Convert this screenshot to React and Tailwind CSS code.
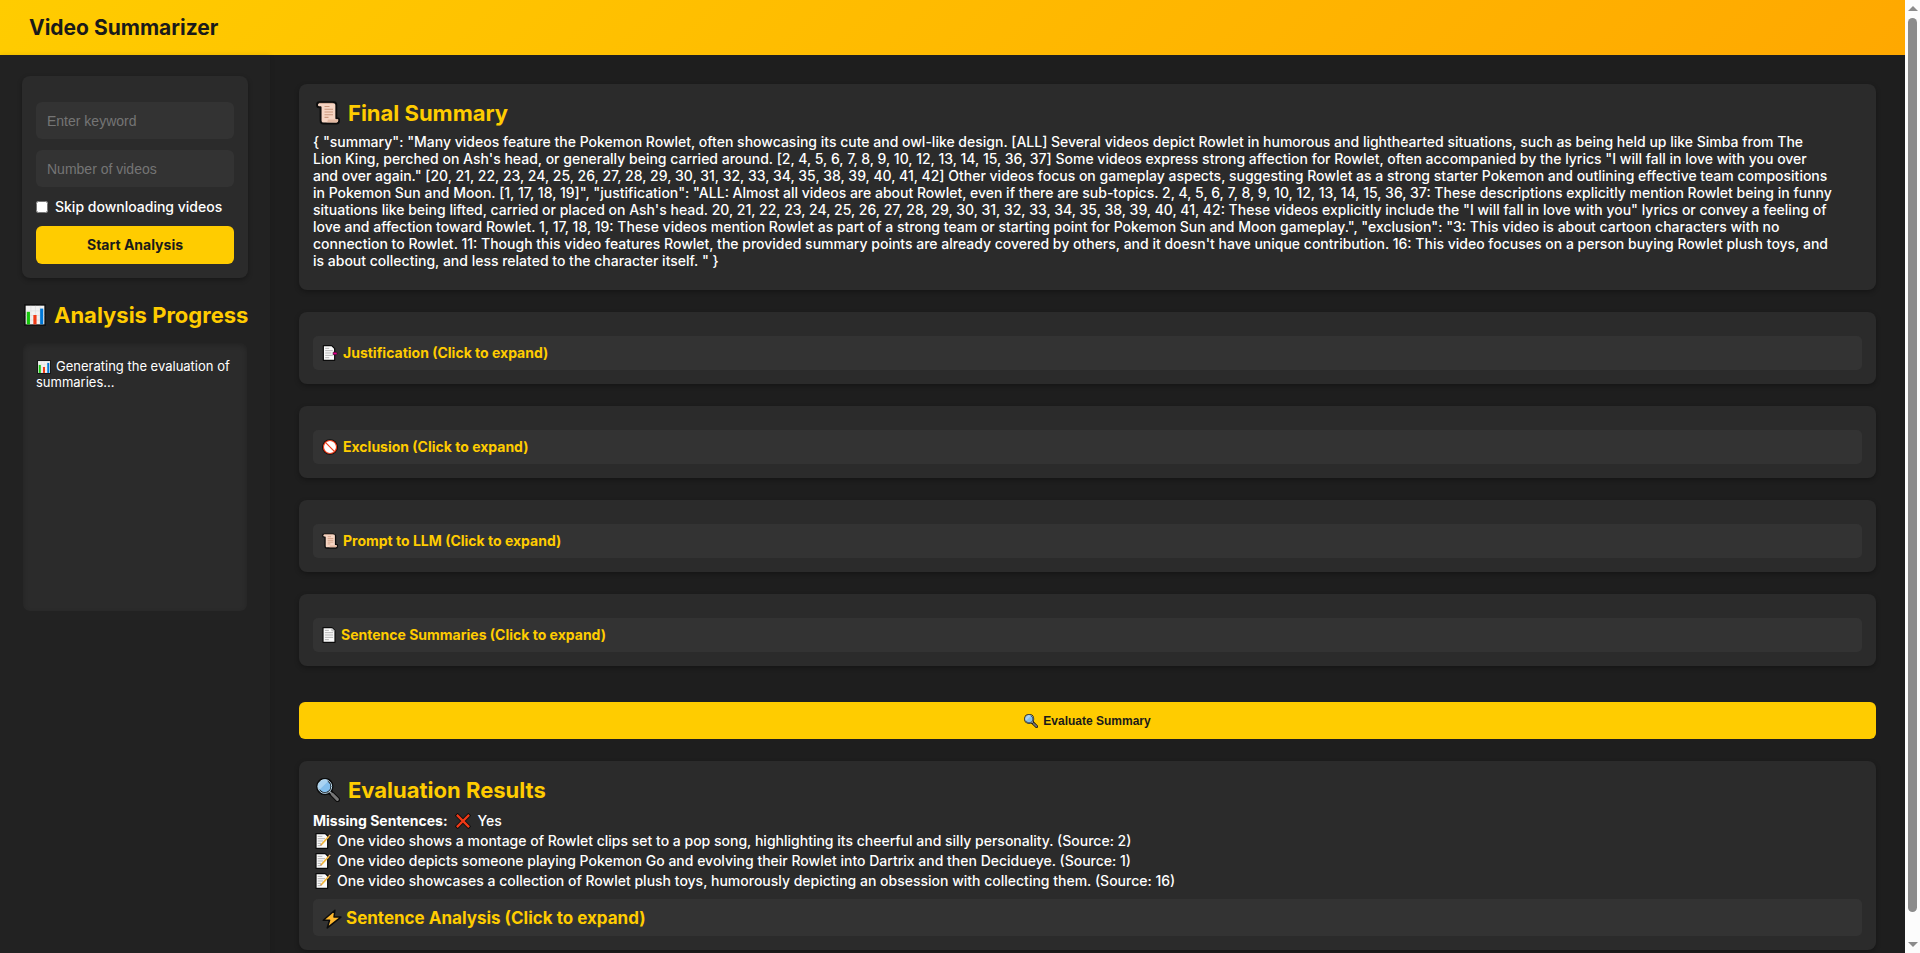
import { useState } from "react";

function Icon({ size = "size-6", box = "0 0 24 24", children }) {
  return (
    <svg viewBox={box} className={`${size} shrink-0`} aria-hidden="true">
      {children}
    </svg>
  );
}

function ScrollIcon({ size }) {
  return (
    <Icon size={size}>
      <path
        d="M3.500 1.200h14.200c2 0 2.600 1 2.600 2.800v13.200h.9c1.500 0 2 .8 1.900 2.300-.1 2-1 3-2.700 3H7.500c-2 0-2.900-1-2.900-2.800V6.300h-1.300C1.800 6.300 1 5.200 1 3.700 1 2.200 1.900 1.200 3.500 1.200z"
        fill="#f6d5c3"
        stroke="#0c0c0c"
        strokeWidth="1.900"
        strokeLinejoin="round"
      />
      <path d="M3.200 2.400h13.600" stroke="#d9b29c" strokeWidth="1" />
      <path d="M8.500 5.500h5M8.500 8.300h8.500M8.500 11h8.500M8.500 13.700h8.500M8.500 16.400h4" stroke="#c9977c" strokeWidth="1.100" />
      <path d="M10 21.300c1.600 0 1.800-1.200 1.800-2.700h10.400c.2 1.800-.6 2.900-2 2.900z" fill="#e3b9a2" />
    </Icon>
  );
}

function ChartIcon({ size }) {
  return (
    <Icon size={size}>
      <rect x="1" y="1" width="22" height="22" fill="#f2f2f2" stroke="#0c0c0c" strokeWidth="1.600" />
      <path d="M2 7.500h20M2 12.500h20M2 17.500h20M7.500 2v20M12.500 2v20M17.500 2v20" stroke="#dcdcdc" strokeWidth=".7" />
      <path d="M3 8.500h3.500V22.200H3z" fill="#16c60c" />
      <path d="M10.200 12h3.500v10.200h-3.500z" fill="#f03a17" />
      <path d="M17.600 5h3.400v17.200h-3.400z" fill="#0078d7" />
    </Icon>
  );
}

function PageIcon() {
  return (
    <Icon size="h-4 w-3.5" box="0.500 0 21 24">
      <path d="M2 1h13.500l4.500 4.500V23H2z" fill="#fafafa" stroke="#0c0c0c" strokeWidth="1.800" strokeLinejoin="round" />
      <path d="M4.800 5h6M4.800 8.500h12.400M4.800 12h12.400M4.800 15.500h12.400M4.800 19h6" stroke="#b5b5b5" strokeWidth="1.500" />
      <path d="M15.200 1.500v4.300h4.500" fill="#dedede" stroke="#8c8c8c" strokeWidth=".7" />
    </Icon>
  );
}

function TabPageIcon({ size }) {
  return (
    <Icon size={size}>
      <path d="M2 1h12.500l4.500 4.500V23H2z" fill="#fafafa" stroke="#0c0c0c" strokeWidth="1.800" strokeLinejoin="round" />
      <path d="M4.800 5h6M4.800 8.500h11.400M4.800 12h9.400M4.800 15.500h11.400M4.800 19h6" stroke="#b5b5b5" strokeWidth="1.500" />
      <path d="M16.500 10.800h5c1.400 0 1.400 3.800 0 3.800h-5z" fill="#e3008c" stroke="#1a0a12" strokeWidth=".8" />
    </Icon>
  );
}

function ForbiddenIcon({ size }) {
  return (
    <Icon size={size}>
      <circle cx="12" cy="12" r="11.800" fill="#0c0c0c" />
      <circle cx="12" cy="12" r="9.800" fill="#fff" stroke="#f03a17" strokeWidth="1.700" />
      <path d="M5.500 5.500l13 13" stroke="#f03a17" strokeWidth="1.700" />
    </Icon>
  );
}

function LensIcon({ size }) {
  return (
    <Icon size={size}>
      <path d="M13.500 13.500l8 8" stroke="#0c0c0c" strokeWidth="5.200" strokeLinecap="round" />
      <circle cx="8.800" cy="8.500" r="7.200" fill="#83beec" stroke="#0c0c0c" strokeWidth="3" />
      <path d="M13.300 13.300l2.500 2.500" stroke="#9aa0a4" strokeWidth="1.500" />
      <path d="M16.300 16.300l5.100 5.100" stroke="#767676" strokeWidth="3" strokeLinecap="round" />
      <path d="M3.200 12a6.600 6.600 0 0 1 9.200-9.100z" fill="#a9d3f2" />
      <circle cx="8.800" cy="8.500" r="6.900" fill="none" stroke="#bfe0f5" strokeWidth="1" />
    </Icon>
  );
}

function CrossIcon({ size }) {
  return (
    <Icon size={size}>
      <path d="M4 4l16 16M20 4L4 20" stroke="#0c0c0c" strokeWidth="6" strokeLinecap="square" />
      <path d="M4 4l16 16M20 4L4 20" stroke="#f03a17" strokeWidth="3.400" strokeLinecap="square" />
    </Icon>
  );
}

function MemoIcon({ size }) {
  return (
    <Icon size={size}>
      <path d="M1.500 1h14l3.500 3.500V23H1.500z" fill="#fafafa" stroke="#0c0c0c" strokeWidth="1.800" strokeLinejoin="round" />
      <path d="M4 5h7M4 8.500h11M4 12h8M4 15.500h5M4 19h4" stroke="#b5b5b5" strokeWidth="1.500" />
      <path d="M22.500 3.200L20 6" stroke="#0c0c0c" strokeWidth="4" />
      <path d="M20.800 5.100L9.300 17.600" stroke="#f2b63c" strokeWidth="2.600" />
      <path d="M22.800 3l-1.800 2" stroke="#e8b07a" strokeWidth="2.400" />
      <path d="M7.800 19.300l.8-2.700 1.900 1.700z" fill="#8e562e" />
    </Icon>
  );
}

function BoltIcon({ size }) {
  return (
    <Icon size={size}>
      <path
        d="M15.500 1.500L1.500 13.500h7.600L6.300 22.700 22.700 9.700h-8.300z"
        fill="#ffb92e"
        stroke="#0c0c0c"
        strokeWidth="1.800"
        strokeLinejoin="round"
      />
    </Icon>
  );
}

const card = "rounded-lg bg-[#2b2b2b] shadow-[0_2px_5px_rgba(0,0,0,0.3)]";
const heading = "flex h-[30px] items-center text-[22px] font-bold text-[#ffcc00]";
const field =
  "h-[37px] w-full rounded-md bg-[#333333] px-[11px] font-['Liberation_Sans',sans-serif] text-sm text-white outline-none placeholder:text-[#757575]";

const summaryLines = [
  `{ "summary": "Many videos feature the Pokemon Rowlet, often showcasing its cute and owl-like design. [ALL] Several videos depict Rowlet in humorous and lighthearted situations, such as being held up like Simba from The`,
  `Lion King, perched on Ash's head, or generally being carried around. [2, 4, 5, 6, 7, 8, 9, 10, 12, 13, 14, 15, 36, 37] Some videos express strong affection for Rowlet, often accompanied by the lyrics "I will fall in love with you over`,
  `and over again." [20, 21, 22, 23, 24, 25, 26, 27, 28, 29, 30, 31, 32, 33, 34, 35, 38, 39, 40, 41, 42] Other videos focus on gameplay aspects, suggesting Rowlet as a strong starter Pokemon and outlining effective team compositions`,
  `in Pokemon Sun and Moon. [1, 17, 18, 19]", "justification": "ALL: Almost all videos are about Rowlet, even if there are sub-topics. 2, 4, 5, 6, 7, 8, 9, 10, 12, 13, 14, 15, 36, 37: These descriptions explicitly mention Rowlet being in funny`,
  `situations like being lifted, carried or placed on Ash's head. 20, 21, 22, 23, 24, 25, 26, 27, 28, 29, 30, 31, 32, 33, 34, 35, 38, 39, 40, 41, 42: These videos explicitly include the "I will fall in love with you" lyrics or convey a feeling of`,
  `love and affection toward Rowlet. 1, 17, 18, 19: These videos mention Rowlet as part of a strong team or starting point for Pokemon Sun and Moon gameplay.", "exclusion": "3: This video is about cartoon characters with no`,
  `connection to Rowlet. 11: Though this video features Rowlet, the provided summary points are already covered by others, and it doesn't have unique contribution. 16: This video focuses on a person buying Rowlet plush toys, and`,
  `is about collecting, and less related to the character itself. " }`,
];

const sections = [
  { title: "Justification (Click to expand)", icon: TabPageIcon },
  { title: "Exclusion (Click to expand)", icon: ForbiddenIcon },
  { title: "Prompt to LLM (Click to expand)", icon: ScrollIcon },
  { title: "Sentence Summaries (Click to expand)", icon: PageIcon },
];

const missing = [
  "One video shows a montage of Rowlet clips set to a pop song, highlighting its cheerful and silly personality. (Source: 2)",
  "One video depicts someone playing Pokemon Go and evolving their Rowlet into Dartrix and then Decidueye. (Source: 1)",
  "One video showcases a collection of Rowlet plush toys, humorously depicting an obsession with collecting them. (Source: 16)",
];

function Sidebar() {
  const [skip, setSkip] = useState(false);
  return (
    <aside className="relative w-[270px] shrink-0 bg-[#222222] px-[22px] pt-[21px] shadow-[0_0_5px_rgba(0,0,0,0.1)]">
      <form className={`${card} px-3.5 pt-[26px] pb-3.5`} onSubmit={(e) => e.preventDefault()}>
        <input aria-label="Keyword" placeholder="Enter keyword" className={field} />
        <input aria-label="Number of videos" placeholder="Number of videos" className={`${field} mt-[11px]`} />
        <label className="mt-2.5 mb-2.5 flex h-[19px] items-center gap-[7px] text-sm font-medium">
          <input type="checkbox" className="size-3" checked={skip} onChange={(e) => setSkip(e.target.checked)} />
          Skip downloading videos
        </label>
        <button type="submit" className="h-[38px] w-full rounded-md bg-[#ffcc00] text-sm font-bold text-[#1a1a1a]">
          Start Analysis
        </button>
      </form>
      <h2 className={`${heading} mt-[22px] gap-2 pl-0.5 whitespace-nowrap`}>
        <ChartIcon size="size-[22px]" />
        Analysis Progress
      </h2>
      <div className="mt-3 h-[270px] rounded-lg border border-[#222222] bg-[#2b2b2b] px-[13px] py-[15px] text-[13px] leading-4 shadow-[inset_0_2px_5px_rgba(0,0,0,0.2)]">
        <p>
          <span className="mr-[5px] ml-px inline-flex align-middle">
            <ChartIcon size="size-3.5" />
          </span>
          Generating the evaluation of summaries...
        </p>
      </div>
    </aside>
  );
}

function Main() {
  return (
    <main className="flex min-w-0 grow flex-col gap-[22px] px-[29px] pt-[29px] pb-10">
      <section className={`${card} px-3.5 pt-3.5 pb-[21px]`}>
        <h2 className={`${heading} gap-2 pl-[3px]`}>
          <ScrollIcon />
          Final Summary
        </h2>
        <p className="mt-[5px] text-sm leading-[17px] font-medium">
          {summaryLines.map((line) => (
            <span key={line} className="block">
              {line}
            </span>
          ))}
        </p>
      </section>

      {sections.map(({ title, icon: SectionIcon }) => (
        <section key={title} className={`${card} px-3.5 pt-6 pb-3.5`}>
          <details>
            <summary className="flex h-[34px] cursor-pointer list-none items-center gap-[5px] rounded-[5px] bg-[#333333] px-[9px] text-sm font-bold text-[#ffcc00]">
              <SectionIcon size="size-4" />
              {title}
            </summary>
          </details>
        </section>
      ))}

      <button
        type="button"
        className="mt-3.5 flex h-[37px] w-full items-center justify-center gap-[5px] rounded-md bg-[#ffcc00] font-['Liberation_Sans',sans-serif] text-xs font-bold text-[#1a1a1a]"
      >
        <LensIcon size="size-3.5" />
        Evaluate Summary
      </button>

      <section className={`${card} p-3.5`}>
        <h2 className={`${heading} gap-2 pl-[3px]`}>
          <LensIcon />
          Evaluation Results
        </h2>
        <div className="mt-1.5 text-sm leading-5 font-medium">
          <p className="flex items-center gap-[7px]">
            <strong className="font-bold">Missing Sentences:</strong>
            <CrossIcon size="size-4" />
            Yes
          </p>
          <ul>
            {missing.map((line) => (
              <li key={line} className="flex items-center gap-1.5 pl-0.5">
                <MemoIcon size="size-4" />
                {line}
              </li>
            ))}
          </ul>
        </div>
        <details className="mt-2">
          <summary className="flex h-[37px] cursor-pointer list-none items-center gap-1 rounded-[5px] bg-[#333333] px-[9px] pt-0.5 text-[17px] font-bold text-[#ffcc00]">
            <BoltIcon size="size-5" />
            Sentence Analysis (Click to expand)
          </summary>
        </details>
      </section>
    </main>
  );
}

function Scrollbar() {
  return (
    <div className="flex w-[15px] shrink-0 flex-col items-center bg-[#fcfcfc] pt-1.5 pb-1.5" aria-hidden="true">
      <svg viewBox="0 0 10 5" className="h-[5px] w-2.5">
        <path d="M5 0l5 5H0z" fill="#8b8b8b" />
      </svg>
      <div className="mt-[7px] mb-[30px] w-[9px] grow rounded-full bg-[#8b8b8b]" />
      <svg viewBox="0 0 10 5" className="h-[5px] w-2.5">
        <path d="M0 0h10L5 5z" fill="#8b8b8b" />
      </svg>
    </div>
  );
}

export default function App() {
  return (
    <div className="flex h-screen bg-[#1e1e1e] font-['Inter',sans-serif] text-white">
      <div className="flex min-w-0 grow flex-col overflow-y-auto [scrollbar-width:none]">
        <header className="flex h-[55px] shrink-0 items-center bg-[linear-gradient(135deg,#ffcc00,#ffa800)] px-[29px]">
          <h1 className="text-[21px] font-bold text-[#1a1a1a]">Video Summarizer</h1>
        </header>
        <div className="flex grow">
          <Sidebar />
          <Main />
        </div>
      </div>
      <Scrollbar />
    </div>
  );
}
